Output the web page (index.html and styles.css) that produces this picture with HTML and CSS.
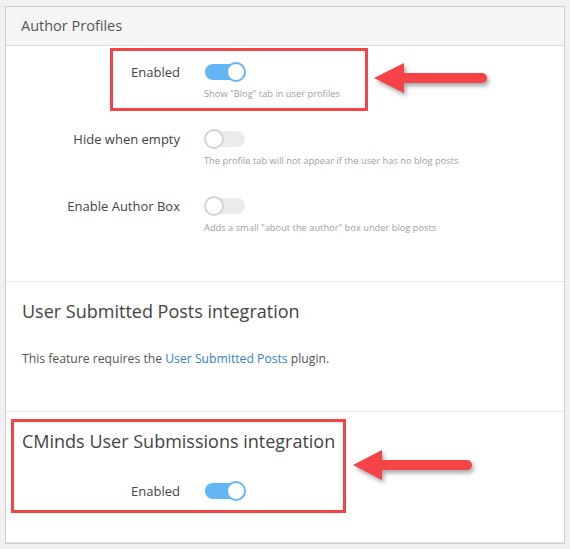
FILE: index.html
```html
<!DOCTYPE html>
<html lang="en">
<head>
<meta charset="UTF-8">
<meta name="viewport" content="width=device-width, initial-scale=1.0">
<title>Blog Settings</title>
<link rel="stylesheet" href="styles.css">
</head>
<body>
<div class="panel">
    <div class="panel-head">Author Profiles</div>

    <div class="section section-profiles">
        <div class="field">
            <label class="field-label">Enabled</label>
            <div class="field-control">
                <span class="toggle on"></span>
                <p class="hint">Show "Blog" tab in user profiles</p>
            </div>
        </div>
        <div class="field">
            <label class="field-label">Hide when empty</label>
            <div class="field-control">
                <span class="toggle"></span>
                <p class="hint">The profile tab will not appear if the user has no blog posts</p>
            </div>
        </div>
        <div class="field">
            <label class="field-label">Enable Author Box</label>
            <div class="field-control">
                <span class="toggle"></span>
                <p class="hint">Adds a small "about the author" box under blog posts</p>
            </div>
        </div>
    </div>

    <div class="section section-usp">
        <h2 class="section-title">User Submitted Posts integration</h2>
        <p class="note">This feature requires the <a href="#">User Submitted Posts</a> plugin.</p>
    </div>

    <div class="section section-cmus">
        <h2 class="section-title">CMinds User Submissions integration</h2>
        <div class="field field-single">
            <label class="field-label">Enabled</label>
            <div class="field-control">
                <span class="toggle on"></span>
            </div>
        </div>
    </div>

    <!-- annotations drawn over the screenshot -->
    <div class="mark mark-one"></div>
    <div class="mark mark-two"></div>
    <svg class="arrow arrow-one" width="130" height="44" viewBox="0 0 130 44">
        <polygon points="2,19 32,4 32,34" fill="#f44448"/>
        <line x1="30" y1="19" x2="110" y2="19" stroke="#f44448" stroke-width="10" stroke-linecap="round"/>
    </svg>
    <svg class="arrow arrow-two" width="130" height="44" viewBox="0 0 130 44">
        <polygon points="2,19 31,4 31,34" fill="#f44448"/>
        <line x1="29" y1="19" x2="116" y2="19" stroke="#f44448" stroke-width="10" stroke-linecap="round"/>
    </svg>
</div>
</body>
</html>
```

FILE: styles.css
```css
body {
    font-family: "Open Sans", "Noto Sans", Arial, sans-serif;
    margin: 0;
    background: #f1f1f1;
    color: #444;
}

.panel {
    position: relative;
    margin: 6px 0 0 5px;
    width: 558px;
    background: #fff;
    border: 1px solid #cfcfcf;
}

.panel-head {
    height: 38px;
    line-height: 38px;
    padding-left: 15px;
    background: #f5f5f5;
    border-bottom: 1px solid #dcdcdc;
    font-size: 14.5px;
    color: #555;
}

.section {
    border-bottom: 1px solid #e8e8e8;
}

.section:last-of-type {
    border-bottom: none;
}

.section-profiles {
    padding: 16px 0 47px;
    display: flex;
    flex-direction: column;
    gap: 29px;
}

.field {
    display: grid;
    grid-template-columns: 174px 1fr;
    column-gap: 24px;
}

.field-label {
    text-align: right;
    font-size: 13px;
    line-height: 18px;
    margin-top: 1px;
    color: #444;
}

.field-control {
    display: flex;
    flex-direction: column;
    align-items: flex-start;
}

.hint {
    margin: 6px 0 0;
    font-size: 9.3px;
    line-height: 12px;
    color: #a0a0a0;
}

.toggle {
    position: relative;
    display: block;
    width: 42px;
    height: 20px;
}

.toggle::before {
    content: "";
    position: absolute;
    left: 1px;
    right: 1px;
    top: 2px;
    bottom: 2px;
    border-radius: 8px;
    background: #ebebeb;
}

.toggle::after {
    content: "";
    position: absolute;
    top: 0;
    left: 0;
    width: 16px;
    height: 16px;
    border-radius: 50%;
    background: #fff;
    border: 2px solid #d3d3d3;
}

.toggle.on::before {
    background: #64b5f6;
}

.toggle.on::after {
    left: auto;
    right: 0;
    border-color: #64b5f6;
}

.section-title {
    margin: 0;
    padding-left: 16px;
    font-size: 18px;
    line-height: 26px;
    font-weight: normal;
    color: #444;
}

.section-usp {
    padding: 16px 0 42px;
}

.note {
    margin: 25px 0 0;
    padding-left: 16px;
    font-size: 12.2px;
    line-height: 20px;
    color: #555;
}

.note a {
    color: #3582c4;
    text-decoration: none;
}

.section-cmus {
    padding: 16px 0 41px;
}

.field-single {
    margin-top: 27px;
}

.mark {
    position: absolute;
    border: 3px solid #f44448;
}

.mark-one {
    left: 104px;
    top: 41px;
    width: 252px;
    height: 57px;
}

.mark-two {
    left: 5px;
    top: 412px;
    width: 329px;
    height: 88px;
}

.arrow {
    position: absolute;
    filter: drop-shadow(2px 3px 2px rgba(0, 0, 0, 0.35));
}

.arrow-one {
    left: 366px;
    top: 52px;
}

.arrow-two {
    left: 345px;
    top: 439px;
}
```
